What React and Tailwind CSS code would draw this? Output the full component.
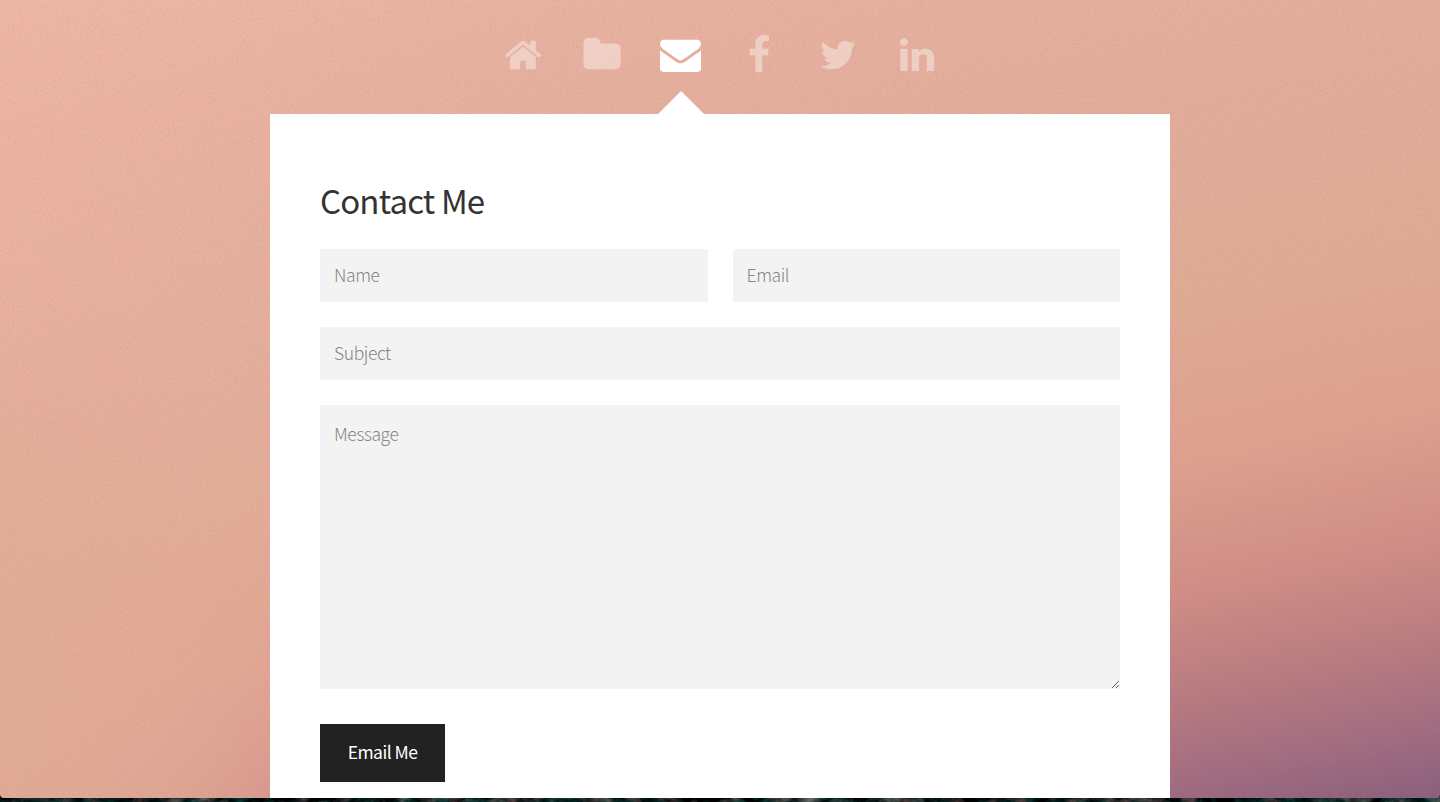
const ICONS = [
  {
    label: "Home",
    d: "M1472 992v480q0 26-19 45t-45 19h-384v-384h-256v384h-384q-26 0-45-19t-19-45v-480q0-1 .5-3t.5-3l575-474 575 474q1 2 1 6zm223-69l-62 74q-8 9-21 11h-3q-13 0-21-7l-692-577-692 577q-12 8-24 7-13-2-21-11l-62-74q-8-10-7-23.5t11-21.5l719-599q32-26 76-26t76 26l244 204v-195q0-14 9-23t23-9h192q14 0 23 9t9 23v408l219 182q10 8 11 21.5t-7 23.5z",
  },
  {
    label: "Portfolio",
    d: "M1728 608v704q0 92-66 158t-158 66h-1216q-92 0-158-66t-66-158v-960q0-92 66-158t158-66h320q92 0 158 66t66 158v32h672q92 0 158 66t66 158z",
  },
  {
    label: "Contact",
    active: true,
    d: "M1792 710v794q0 66-47 113t-113 47h-1472q-66 0-113-47t-47-113v-794q44 49 101 87 362 246 497 345 57 42 92.5 65.5t94.5 48 110 24.5h2q51 0 110-24.5t94.5-48 92.5-65.5q170-123 498-345 57-39 100-87zm0-294q0 79-49 151t-122 123q-376 261-468 325-10 7-42.5 31t-54 38.5-52 32.5-57.5 27-50 9h-2q-23 0-50-9t-57.5-27-52-32.5-54-38.5-42.5-31q-91-64-262-182.5t-205-142.5q-62-42-117-115.5t-55-136.5q0-78 41.5-130t118.5-52h1472q65 0 112.5 47t47.5 113z",
  },
  {
    label: "Facebook",
    d: "M1343 12v264h-157q-86 0-116 36t-30 108v189h293l-39 296h-254v759h-306v-759h-255v-296h255v-218q0-186 104-288.5t277-102.5q147 0 228 12z",
  },
  {
    label: "Twitter",
    d: "M1684 408q-67 98-162 167 1 14 1 42 0 130-38 259.5t-115.5 248.5-184.5 210.5-258 146-323 54.5q-271 0-496-145 35 4 78 4 225 0 401-138-105-2-188-64.5t-114-159.5q33 5 61 5 43 0 85-11-112-23-185.5-111.5t-73.5-205.5v-4q68 38 146 41-66-44-105-115t-39-154q0-88 44-163 121 149 294.5 238.5t371.5 99.5q-8-38-8-74 0-134 94.5-228.5t228.5-94.5q140 0 236 102 109-21 205-78-37 115-142 178 93-10 186-50z",
  },
  {
    label: "LinkedIn",
    d: "M477 625v991h-330v-991h330zm21-306q1 73-50.5 122t-135.5 49h-2q-82 0-132-49t-50-122q0-74 51.5-122.5t134.5-48.5 133 48.5 51 122.5zm1166 729v568h-329v-530q0-105-40.5-164.5t-126.5-59.5q-63 0-105.5 34.5t-63.5 85.5q-11 30-11 81v553h-329q2-399 2-647t-1-296l-1-48h329v144h-2q20-32 41-56t56.5-52 87-43.5 114.5-15.5q171 0 275 113.5t104 332.5z",
  },
];

const field =
  "block w-full h-[53px] px-[14px] pb-[3px] bg-[#f3f3f3] text-[17.5px] tracking-[-0.4px] font-light placeholder:text-[#858585] outline-none";

// fine paper grain over the gradient
function Grain() {
  return (
    <svg className="absolute inset-0 w-full h-full opacity-[0.14]" aria-hidden="true">
      <filter id="grain">
        <feTurbulence type="fractalNoise" baseFrequency="0.6" numOctaves="2" seed="4" />
        <feColorMatrix values="0 0 0 0 0.35  0 0 0 0 0.28  0 0 0 0 0.25  4 0 0 0 -1.8" />
      </filter>
      <rect width="100%" height="100%" filter="url(#grain)" />
    </svg>
  );
}

// sliver of the dark wallpaper under the window
function Wallpaper() {
  return (
    <svg className="block w-full h-[8px] -mt-[4px]" aria-hidden="true">
      <filter id="wallpaper" x="0" y="0" width="100%" height="100%" colorInterpolationFilters="sRGB">
        <feTurbulence type="fractalNoise" baseFrequency="0.06 0.1" numOctaves="4" seed="9" />
        <feColorMatrix values="0.9 0 0 0 -0.39  0.5 0.3 0 0 -0.27  0.5 0.25 0 0 -0.25  0 0 0 0 1" />
      </filter>
      <rect width="100%" height="100%" filter="url(#wallpaper)" />
    </svg>
  );
}

export default function App() {
  return (
    <div className="h-[802px] overflow-hidden bg-[#05211f] font-['Noto_Sans_CJK_SC',sans-serif]">
      <div className="relative z-10 h-[798px] overflow-hidden rounded-b-[4px] bg-[radial-gradient(ellipse_330px_460px_at_0%_90%,#e3ac96_0%,#e3ac96a0_50%,transparent_100%),linear-gradient(90deg,#f0b5a480_0%,#f0b5a400_34%),linear-gradient(168deg,#efb8a6_0%,#e9b19f_14%,#e4ad9a_32%,#e1ab95_50%,#e0a08e_65%,#d08c85_77%,#b97a80_86%,#a06a80_94%,#895e7d_100%)]">
        <Grain />
        <div className="relative flex flex-col items-center">
          <nav className="flex h-[114px] gap-[38.8px] pt-[34.7px]">
            {ICONS.map((icon) => (
              <a key={icon.label} href="#" aria-label={icon.label} className="relative block h-full w-10">
                <svg
                  viewBox="0 0 1792 1792"
                  className={icon.active ? "-ml-[0.8px] -mt-[0.4px] size-[41px] max-w-none fill-white" : "size-10 fill-white/40"}
                >
                  <path d={icon.d} />
                </svg>
                {icon.active && (
                  <span className="absolute bottom-0 -left-[2.5px] h-[23px] w-[46px] bg-white [clip-path:polygon(50%_0,100%_100%,0_100%)]" />
                )}
              </a>
            ))}
          </nav>

          <main className="h-[700px] w-[900px] bg-white px-[50px] pt-[60px]">
            <h1 className="text-[33px] leading-[53px] tracking-[-0.85px] text-[#333]">Contact Me</h1>
            <form className="mt-[22px] flex flex-col gap-[25px]">
              <div className="flex gap-[25px]">
                <input className={field} type="text" placeholder="Name" />
                <input className={field} type="text" placeholder="Email" />
              </div>
              <input className={field} type="text" placeholder="Subject" />
              <textarea
                className="block h-[284px] w-full resize-y bg-[#f3f3f3] px-[14px] py-[15px] text-[17.5px] leading-[27px] tracking-[-0.4px] font-light outline-none placeholder:text-[#858585]"
                placeholder="Message"
              />
              <button
                type="button"
                className="mt-[10px] h-[58px] w-[125px] bg-[#222] pb-[2px] text-[17.5px] tracking-[-0.55px] text-white"
              >
                Email Me
              </button>
            </form>
          </main>
        </div>
      </div>
      <Wallpaper />
    </div>
  );
}
